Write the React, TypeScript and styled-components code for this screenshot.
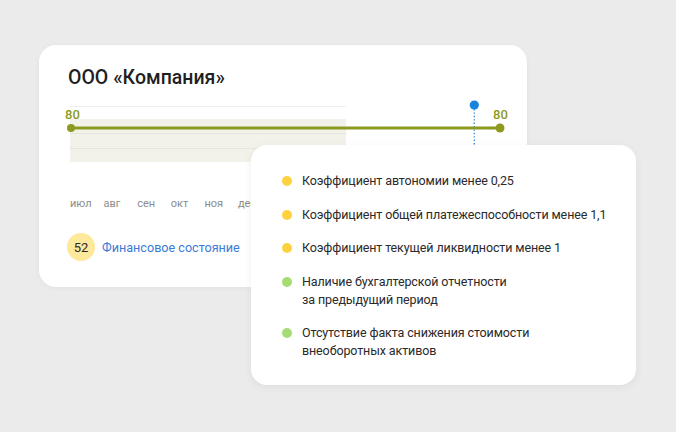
import styled, { createGlobalStyle } from "styled-components";

const GlobalStyle = createGlobalStyle`
  html, body {
    margin: 0;
    padding: 0;
    background: #ebebeb;
  }
  body {
    font-family: Roboto, "Noto Sans", sans-serif;
    -webkit-font-smoothing: antialiased;
  }
`;

const Stage = styled.div`
  position: relative;
  width: 676px;
  height: 432px;
  background: #ebebeb;
  overflow: hidden;
`;

const CompanyCard = styled.div`
  position: relative;
  margin: 45px 0 0 39px;
  width: 488px;
  height: 242px;
  box-sizing: border-box;
  padding: 21px 0 0 29px;
  background: #fff;
  border-radius: 17px;
  box-shadow: 0 1px 6px rgba(0, 0, 0, 0.04);
  overflow: hidden;
`;

const Title = styled.h1`
  margin: 0;
  font-size: 19.5px;
  line-height: 24px;
  font-weight: 500;
  color: #1f1f1f;
`;

const Chart = styled.svg`
  display: block;
  margin: 9px 0 0 -6px;
`;

const Months = styled.div`
  display: flex;
  margin: 32px 0 0 2px;
`;

const Month = styled.span`
  flex: 0 0 33.6px;
  font-size: 11px;
  line-height: 14px;
  color: #8c8c8c;
`;

const ScoreRow = styled.div`
  display: flex;
  align-items: center;
  gap: 7px;
  margin: 22px 0 0 -1px;
`;

const Score = styled.div`
  width: 28px;
  height: 28px;
  border-radius: 50%;
  background: #fde89c;
  display: flex;
  align-items: center;
  justify-content: center;
  font-size: 13px;
  color: #2a2a2a;
`;

const ScoreLink = styled.a`
  font-size: 12.6px;
  color: #3a7bd8;
  text-decoration: none;
`;

const FactorsCard = styled.div`
  position: absolute;
  left: 251px;
  top: 145px;
  width: 385px;
  height: 240px;
  box-sizing: border-box;
  padding: 27px 12px 0 31px;
  background: #fff;
  border-radius: 16px;
  box-shadow: 0 2px 10px rgba(0, 0, 0, 0.06);
  display: flex;
  flex-direction: column;
  gap: 15.5px;
`;

const Factor = styled.div`
  display: flex;
  align-items: flex-start;
  gap: 10px;
  font-size: 12.5px;
  line-height: 18px;
  letter-spacing: -0.12px;
  color: #2a2a2a;
  white-space: nowrap;
`;

const Dot = styled.span<{ $color: string }>`
  flex: 0 0 10px;
  height: 10px;
  margin-top: 4px;
  border-radius: 50%;
  background: ${(p) => p.$color};
`;

const OLIVE = "#8c9a22";
const YELLOW = "#fdd23e";
const GREEN = "#a7dc74";

const months = ["июл", "авг", "сен", "окт", "ноя", "дек"];

const factors = [
  { color: YELLOW, lines: ["Коэффициент автономии менее 0,25"] },
  { color: YELLOW, lines: ["Коэффициент общей платежеспособности менее 1,1"] },
  { color: YELLOW, lines: ["Коэффициент текущей ликвидности менее 1"] },
  { color: GREEN, lines: ["Наличие бухгалтерской отчетности", "за предыдущий период"] },
  { color: GREEN, lines: ["Отсутствие факта снижения стоимости", "внеоборотных активов"] },
];

const App = () => {
  return (
    <Stage>
      <GlobalStyle />
      <CompanyCard>
        <Title>ООО «Компания»</Title>
        <Chart width="452" height="66" viewBox="0 0 452 66">
          <line x1="8" y1="7.5" x2="284" y2="7.5" stroke="#efefef" strokeWidth="1" />
          <rect x="8" y="20" width="276" height="43" fill="#f2f2ea" />
          <line x1="8" y1="34.5" x2="284" y2="34.5" stroke="#e5e5db" strokeWidth="1" />
          <line x1="8" y1="49.5" x2="284" y2="49.5" stroke="#e5e5db" strokeWidth="1" />
          <line x1="412.3" y1="10" x2="412.3" y2="66" stroke="#3b8fe0" strokeWidth="1.4" strokeDasharray="1.4 2" />
          <circle cx="412.3" cy="6" r="4.6" fill="#1a84dc" />
          <line x1="9" y1="29" x2="438" y2="29" stroke={OLIVE} strokeWidth="3" />
          <circle cx="9" cy="29" r="4" fill={OLIVE} />
          <circle cx="438" cy="29" r="4.5" fill={OLIVE} />
          <text x="3" y="20" fontSize="13" fontWeight="500" fill={OLIVE} fontFamily="Roboto, sans-serif">80</text>
          <text x="431" y="20" fontSize="13" fontWeight="500" fill={OLIVE} fontFamily="Roboto, sans-serif">80</text>
        </Chart>
        <Months>
          {months.map((m) => (
            <Month key={m}>{m}</Month>
          ))}
        </Months>
        <ScoreRow>
          <Score>52</Score>
          <ScoreLink href="#">Финансовое состояние</ScoreLink>
        </ScoreRow>
      </CompanyCard>
      <FactorsCard>
        {factors.map((f, i) => (
          <Factor key={i}>
            <Dot $color={f.color} />
            <div>
              {f.lines.map((l) => (
                <div key={l}>{l}</div>
              ))}
            </div>
          </Factor>
        ))}
      </FactorsCard>
    </Stage>
  );
};

export default App;
